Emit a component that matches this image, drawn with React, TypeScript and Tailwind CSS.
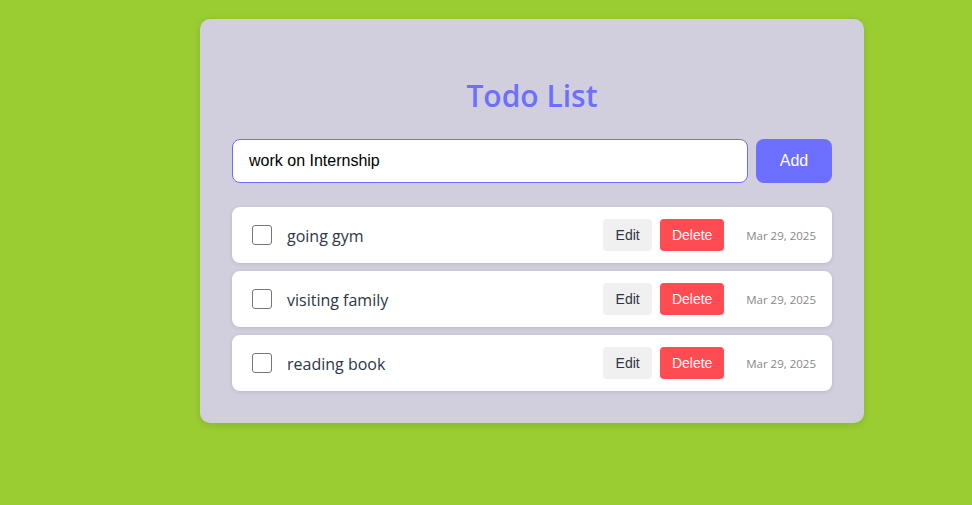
import React, { useState } from "react";

type Todo = { id: number; text: string; done: boolean; date: string };

const initial: Todo[] = [
  { id: 1, text: "going gym", done: false, date: "Mar 29, 2025" },
  { id: 2, text: "visiting family", done: false, date: "Mar 29, 2025" },
  { id: 3, text: "reading book", done: false, date: "Mar 29, 2025" },
];

export default function App() {
  const [todos, setTodos] = useState<Todo[]>(initial);
  const [text, setText] = useState("work on Internship");

  return (
    <div className="min-h-[505px] w-full bg-[#9acd32] pt-[19px] pl-[200px]">
      <div className="w-[664px] rounded-[10px] bg-[#d1cfde] px-8 pt-[53px] pb-8 shadow-[0_2px_8px_rgba(0,0,0,0.12)]">
        <h1 className="mb-[19px] text-center font-['Segoe_UI','Open_Sans',sans-serif] text-[30px] leading-[48px] font-semibold text-[#6c6fff]">
          Todo List
        </h1>
        <div className="mb-6 flex gap-2">
          <input
            className="h-11 flex-1 rounded-lg border border-[#6c6fff] bg-white px-4 font-['Liberation_Sans',Arial,sans-serif] text-base text-black outline-none"
            value={text}
            onChange={(e) => setText(e.target.value)}
          />
          <button className="h-11 w-[76px] rounded-lg bg-[#6c6fff] font-['Liberation_Sans',Arial,sans-serif] text-base text-white">
            Add
          </button>
        </div>
        <div className="flex flex-col gap-2">
          {todos.map((t) => (
            <div
              key={t.id}
              className="flex h-14 items-center rounded-lg bg-white pr-4 pl-5 shadow-[0_1px_4px_rgba(0,0,0,0.12)]"
            >
              <input
                type="checkbox"
                checked={t.done}
                onChange={() =>
                  setTodos(todos.map((x) => (x.id === t.id ? { ...x, done: !x.done } : x)))
                }
                className="h-5 w-5 appearance-none rounded-[3px] border border-[#767676] bg-white"
              />
              <span className="ml-[15px] flex-1 pt-[2px] font-['Segoe_UI','Open_Sans',sans-serif] text-base text-[#2d3748]">
                {t.text}
              </span>
              <button className="h-8 w-[49px] rounded-[4px] bg-[#f0f0f0] font-['Liberation_Sans',Arial,sans-serif] text-sm text-[#2d3748]">
                Edit
              </button>
              <button className="ml-2 h-8 w-16 rounded-[4px] bg-[#ff4b52] font-['Liberation_Sans',Arial,sans-serif] text-sm text-white">
                Delete
              </button>
              <span className="ml-[22px] pt-[2px] font-['Segoe_UI','Open_Sans',sans-serif] text-[11.5px] text-[#888]">
                {t.date}
              </span>
            </div>
          ))}
        </div>
      </div>
    </div>
  );
}
